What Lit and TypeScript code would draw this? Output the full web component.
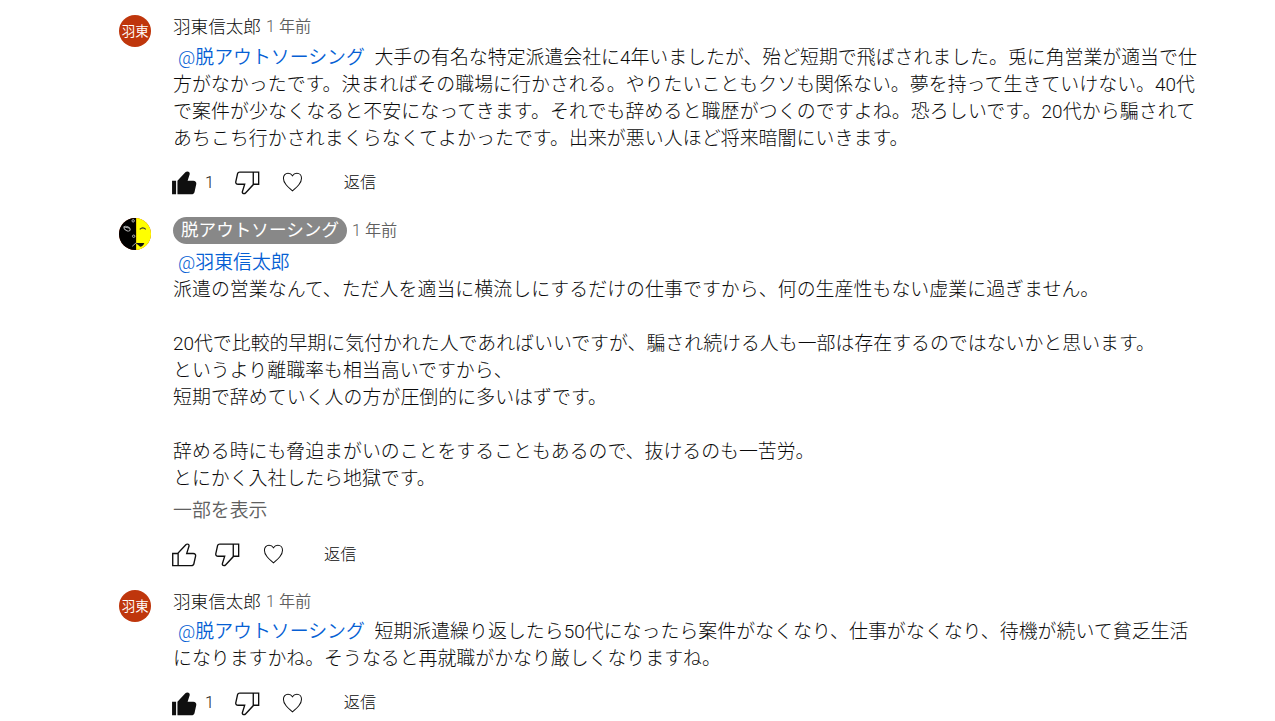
import { LitElement, html, svg, css, nothing } from 'lit';
import { customElement, property } from 'lit/decorators.js';

interface Line {
  text: string;
  spacing?: number;
}

interface Comment {
  kind: string;
  author: string;
  owner?: boolean;
  mention: string;
  lines: Line[];
  likes?: number;
  expanded?: boolean;
}

const comments: Comment[] = [
  {
    kind: 'first',
    author: '羽東信太郎',
    mention: '@脱アウトソーシング',
    lines: [
      { text: '大手の有名な特定派遣会社に4年いましたが、殆ど短期で飛ばされました。兎に角営業が適当で仕' },
      { text: '方がなかったです。決まればその職場に行かされる。やりたいこともクソも関係ない。夢を持って生きていけない。40代', spacing: 0.05 },
      { text: 'で案件が少なくなると不安になってきます。それでも辞めると職歴がつくのですよね。恐ろしいです。20代から騙されて', spacing: 0.13 },
      { text: 'あちこち行かされまくらなくてよかったです。出来が悪い人ほど将来暗闇にいきます。', spacing: 0.08 },
    ],
    likes: 1,
  },
  {
    kind: 'second',
    author: '脱アウトソーシング',
    owner: true,
    mention: '@羽東信太郎',
    lines: [
      { text: '' },
      { text: '派遣の営業なんて、ただ人を適当に横流しにするだけの仕事ですから、何の生産性もない虚業に過ぎません。', spacing: 0.06 },
      { text: '' },
      { text: '20代で比較的早期に気付かれた人であればいいですが、騙され続ける人も一部は存在するのではないかと思います。', spacing: 0.01 },
      { text: 'というより離職率も相当高いですから、', spacing: 0.03 },
      { text: '短期で辞めていく人の方が圧倒的に多いはずです。', spacing: 0.06 },
      { text: '' },
      { text: '辞める時にも脅迫まがいのことをすることもあるので、抜けるのも一苦労。' },
      { text: 'とにかく入社したら地獄です。' },
    ],
    expanded: true,
  },
  {
    kind: 'third',
    author: '羽東信太郎',
    mention: '@脱アウトソーシング',
    lines: [
      { text: '短期派遣繰り返したら50代になったら案件がなくなり、仕事がなくなり、待機が続いて貧乏生活', spacing: 0.04 },
      { text: 'になりますかね。そうなると再就職がかなり厳しくなりますね。' },
    ],
    likes: 1,
  },
];

const likeOutline = svg`<path d="M18.77,11h-4.23l1.52-4.94C16.38,5.03,15.54,4,14.38,4c-0.58,0-1.14,0.24-1.52,0.65L7,11H3v10h4h1h9.43c1.06,0,1.98-0.67,2.19-1.61l1.34-6C21.23,12.15,20.18,11,18.77,11z M7,20H4v-8h3V20z M19.98,13.17l-1.34,6C18.54,19.65,18.03,20,17.43,20H8v-8.61l5.6-6.06C13.79,5.12,14.08,5,14.38,5c0.26,0,0.5,0.11,0.63,0.3c0.07,0.1,0.15,0.26,0.09,0.47l-1.52,4.94L13.18,12h1.35h4.23c0.41,0,0.8,0.17,1.03,0.46C19.92,12.61,20.05,12.86,19.98,13.17z"/>`;
const likeFilled = svg`<path d="M3,11h3v10H3V11z M18.77,11h-4.23l1.52-4.94C16.38,5.03,15.54,4,14.38,4c-0.58,0-1.14,0.24-1.52,0.65L7,11v10h10.43c1.06,0,1.98-0.67,2.19-1.61l1.34-6C21.23,12.15,20.18,11,18.77,11z"/>`;
const dislike = svg`<path d="M17,4h-1H6.57C5.5,4,4.59,4.67,4.38,5.61l-1.34,6C2.77,12.85,3.82,14,5.23,14h4.23l-1.52,4.94C7.62,19.97,8.46,21,9.62,21c0.58,0,1.14-0.24,1.52-0.65L17,14h4V4H17z M10.4,19.67C10.21,19.88,9.92,20,9.62,20c-0.26,0-0.5-0.11-0.63-0.3c-0.07-0.1-0.15-0.26-0.09-0.47l1.52-4.94l0.4-1.29H9.46H5.23c-0.41,0-0.8-0.17-1.03-0.46c-0.12-0.15-0.25-0.4-0.18-0.72l1.34-6C5.46,5.35,5.97,5,6.57,5H16v8.61L10.4,19.67z M20,13h-3V5h3V13z"/>`;

@customElement('comment-item')
class CommentItem extends LitElement {
  @property({ attribute: false }) comment!: Comment;

  static styles = css`
    :host {
      display: flex;
      gap: 21.6px;
      color: #0a0a0a;
    }

    .avatar {
      flex: none;
      width: 32.4px;
      height: 32.4px;
      border-radius: 50%;
      overflow: hidden;
      background: #bf360c;
      color: #fff;
      font-size: 13.5px;
      font-weight: 350;
      line-height: 32.4px;
      text-align: center;
      white-space: nowrap;
    }

    .avatar svg {
      display: block;
      width: 100%;
      height: 100%;
    }

    .avatar.owner {
      margin-top: 0.6px;
    }

    .main {
      display: flex;
      flex-direction: column;
      flex: 1;
    }

    .header {
      display: flex;
      align-items: center;
      gap: 5px;
      height: 24px;
      font-size: 17.6px;
      line-height: 24px;
      margin-bottom: 4.5px;
    }

    .header.owner {
      height: 27px;
    }

    .chip {
      height: 27px;
      line-height: 27px;
      padding: 0 8px;
      border-radius: 14px;
      background: #888;
      color: #fff;
      font-weight: 400;
    }

    .time {
      color: #606060;
      font-size: 16.2px;
      font-weight: 350;
    }

    .line {
      height: 27px;
      font-size: 18.9px;
      line-height: 27px;
      white-space: pre;
    }

    .mention {
      color: #065fd4;
      font-weight: 350;
      letter-spacing: 0;
      padding: 0 9.5px 0 5px;
    }

    .less {
      height: 27px;
      margin-top: 5px;
      font-size: 18.9px;
      font-weight: 350;
      line-height: 27px;
      color: #606060;
    }

    .actions {
      display: flex;
      align-items: center;
      height: 32px;
      margin: 15px 0 -1px -5.4px;
      font-size: 16.2px;
      line-height: 24px;
    }

    .icon {
      flex: none;
      width: 32.4px;
      height: 32.4px;
      fill: #0f0f0f;
    }

    .count {
      width: 30.6px;
      padding-left: 5px;
      box-sizing: border-box;
      color: #222;
    }

    .space {
      width: 10.8px;
    }

    .heart {
      fill: none;
      stroke: #0f0f0f;
      stroke-width: 0.75;
      margin-left: 13.5px;
    }

    .reply {
      margin-left: 35px;
    }
  `;

  renderAvatar() {
    if (!this.comment.owner) {
      return html`<div class="avatar">羽東</div>`;
    }
    return html`
      <div class="avatar owner">
        <svg viewBox="0 0 32 32">
          <rect width="17" height="32" fill="#000" />
          <rect x="17" width="15" height="32" fill="#ff0" />
          <g fill="none" stroke="#bbb" stroke-width="0.9">
            <ellipse cx="8" cy="10.5" rx="3.3" ry="1.9" transform="rotate(30 8 10.5)" />
            <path d="M4.5 8.8l6 1.2" />
            <circle cx="14" cy="2.8" r="1.2" />
            <circle cx="14.5" cy="18" r="1.2" />
            <path d="M13 28l4-3.5" />
          </g>
          <path d="M20.5 11.2q3-3 6 0" fill="none" stroke="#333" stroke-width="1.1" />
          <path d="M16.5 24.8h8.5q-1.5 3.7-4 3.7z" fill="#111" />
        </svg>
      </div>
    `;
  }

  render() {
    const c = this.comment;
    return html`
      ${this.renderAvatar()}
      <div class="main">
        <div class="header ${c.owner ? 'owner' : ''}">
          <span class=${c.owner ? 'chip' : 'author'}>${c.author}</span>
          <span class="time">1 年前</span>
        </div>
        <div class="text">
          ${c.lines.map(
            (line, i) => html`<div class="line" style="letter-spacing: ${line.spacing ?? 0}px">${i === 0
              ? html`<span class="mention">${c.mention}</span>`
              : nothing}${line.text}</div>`
          )}
        </div>
        ${c.expanded ? html`<div class="less">一部を表示</div>` : nothing}
        <div class="actions">
          <svg class="icon" viewBox="0 0 24 24">${c.likes ? likeFilled : likeOutline}</svg>
          ${c.likes
            ? html`<span class="count">${c.likes}</span>`
            : html`<span class="space"></span>`}
          <svg class="icon" viewBox="0 0 24 24">${dislike}</svg>
          <svg class="icon heart" viewBox="0 0 24 24">
            <path d="M12.2 18.4C8.2 14.9 5.5 12.4 5.5 9C5.5 6.9 7 5.4 8.9 5.4C10.2 5.4 11.5 6.1 12.2 7.3C12.9 6.1 14.2 5.4 15.5 5.4C17.4 5.4 18.9 6.9 18.9 9C18.9 12.4 16.2 14.9 12.2 18.4z" />
          </svg>
          <span class="reply">返信</span>
        </div>
      </div>
    `;
  }
}

@customElement('app-root')
class AppRoot extends LitElement {
  static styles = css`
    :host {
      display: block;
      box-sizing: border-box;
      height: 721px;
      padding: 15px 0 0 119px;
      overflow: hidden;
      background: #fff;
      font-family: Roboto, 'Noto Sans CJK JP', sans-serif;
      font-weight: 300;
    }

    .first {
      margin-bottom: 19.5px;
    }

    .second {
      margin-bottom: 20px;
    }
  `;

  render() {
    return html`${comments.map(
      (c) => html`<comment-item class=${c.kind} .comment=${c}></comment-item>`
    )}`;
  }
}
